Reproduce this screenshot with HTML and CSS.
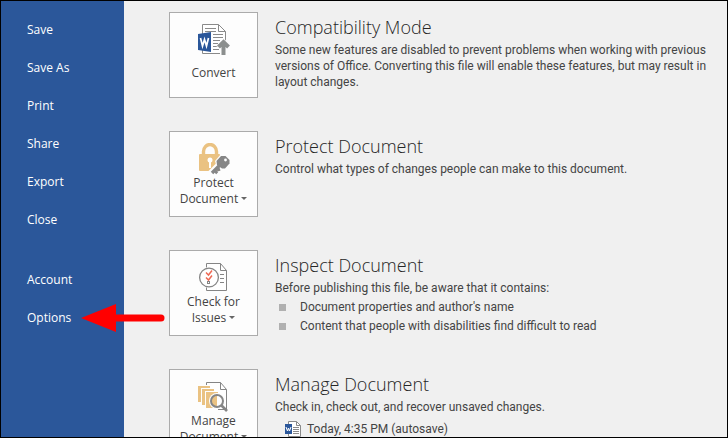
FILE: index.html
```
<!DOCTYPE html>
<html lang="en">
<head>
    <meta charset="UTF-8">
    <meta name="viewport" content="width=device-width, initial-scale=1.0">
    <title>Info</title>
    <link rel="stylesheet" href="styles.css">
</head>
<body>
    <div class="backstage">
        <nav class="sidebar">
            <a href="#save">Save</a>
            <a href="#save-as">Save As</a>
            <a href="#print">Print</a>
            <a href="#share">Share</a>
            <a href="#export">Export</a>
            <a href="#close">Close</a>
            <a href="#account" class="group-start">Account</a>
            <a href="#options" class="options">Options
                <svg class="arrow" width="86" height="30" viewBox="0 0 86 30" aria-hidden="true">
                    <path d="M32 15H80" stroke="#f00" stroke-width="7" stroke-linecap="round"/>
                    <path d="M0 15L35 1V29Z" fill="#f00"/>
                </svg>
            </a>
        </nav>

        <main class="content">
            <section class="row">
                <button type="button" class="tile single">
                    <svg class="icon" viewBox="0 0 32 32" aria-hidden="true">
                        <path d="M4.500 .500H20.500L27.500 7.500V29.500H4.500Z" fill="#fff" stroke="#8a8a8a"/>
                        <path d="M20.500 .500V7.500H27.500" fill="none" stroke="#8a8a8a"/>
                        <path d="M7 4.500H18M7 7.500H18M15 10.500H25M15 13.500H25M15 16.500H22M15 19.500H20M15 22.500H21M15 25.500H21" stroke="#8a8a8a"/>
                        <path d="M18 22L25.500 14L32 21V31H22V24Z" fill="#fdfdfd"/>
                        <path d="M0 10L13 8V28L0 26Z" fill="#2b579a"/>
                        <path d="M2.500 14L4.500 22L6.500 15.500L8.500 22L10.500 14" fill="none" stroke="#fff" stroke-width="1.700"/>
                        <path d="M25.500 31V19M20.500 23L25.500 18L30.500 23" fill="none" stroke="#8c8f8e" stroke-width="4"/>
                    </svg>
                    <span>Convert</span>
                </button>
                <div class="info">
                    <h2>Compatibility Mode</h2>
                    <p>Some new features are disabled to prevent problems when working with previous versions of Office. Converting this file will enable these features, but may result in layout changes.</p>
                </div>
            </section>

            <section class="row">
                <button type="button" class="tile">
                    <svg class="icon" viewBox="0 0 32 32" aria-hidden="true">
                        <path d="M5.500 12V8.500a6.500 7 0 0 1 13 0V12" fill="none" stroke="#eac282" stroke-width="3.400"/>
                        <rect x="1" y="11" width="21" height="17" rx="1" fill="#eac282"/>
                        <circle cx="12" cy="17" r="2.500" fill="#fff"/>
                        <path d="M11 17h2v8h-2z" fill="#fff"/>
                        <path d="M12 30L22 20" stroke="#fdfdfd" stroke-width="5"/>
                        <path d="M17 18L23 11H28L32 16L31 24L26 28L19 25Z" fill="#fdfdfd"/>
                        <path d="M18.500 18L23 13H27.500L31.500 17V20.500L27 25.500H24L19 22Z" fill="#868686"/>
                        <path d="M14 30L23 21M17 30L19 28M19 27L22 26" stroke="#868686" stroke-width="3.400"/>
                        <circle cx="27.500" cy="17" r="1.400" fill="#fff"/>
                    </svg>
                    <span>Protect<br>Document <i class="caret"></i></span>
                </button>
                <div class="info">
                    <h2>Protect Document</h2>
                    <p>Control what types of changes people can make to this document.</p>
                </div>
            </section>

            <section class="row">
                <button type="button" class="tile">
                    <svg class="icon" viewBox="0 0 32 32" aria-hidden="true">
                        <path d="M8.500 1.500H22.500L28.500 8.500V28.500H8.500Z" fill="#fff" stroke="#858585"/>
                        <path d="M22.500 1.500V8.500H28.500" fill="none" stroke="#858585"/>
                        <path d="M22 12.500H26M22 16.500H26M22 20.500H26" stroke="#858585"/>
                        <circle cx="11" cy="15.500" r="10.500" fill="#fdfdfd"/>
                        <circle cx="11" cy="15.500" r="9.400" fill="#fff" stroke="#858585" stroke-width="1.300"/>
                        <path d="M8 10.500L10.500 13L14 8.500M8 15.500L10.500 18L14 13.500" fill="none" stroke="#ee6a55" stroke-width="1.500"/>
                        <rect x="9.500" y="19.500" width="2" height="2" fill="none" stroke="#858585"/>
                    </svg>
                    <span>Check for<br>Issues <i class="caret"></i></span>
                </button>
                <div class="info">
                    <h2>Inspect Document</h2>
                    <p>Before publishing this file, be aware that it contains:</p>
                    <ul class="issues">
                        <li>Document properties and author's name</li>
                        <li>Content that people with disabilities find difficult to read</li>
                    </ul>
                </div>
            </section>

            <section class="row">
                <button type="button" class="tile">
                    <svg class="icon" viewBox="0 0 32 32" aria-hidden="true">
                        <path d="M8.500 4V1.500H22.500L28.500 8.500V28.500H20" fill="#fff" stroke="#858585"/>
                        <path d="M22.500 1.500V8.500H28.500" fill="none" stroke="#858585"/>
                        <path d="M0 5H12V7H3V21H0Z" fill="#eac282"/>
                        <path d="M4 8H16V10H7V24H4Z" fill="#eac282"/>
                        <path d="M8 11H20V27H8Z" fill="#eac282"/>
                        <circle cx="19" cy="20" r="8" fill="#fdfdfd"/>
                        <path d="M19 14a6 6 0 0 0 0 12z" fill="#eac282"/>
                        <circle cx="19" cy="20" r="6" fill="none" stroke="#858585" stroke-width="2"/>
                        <path d="M23.500 24.500L29 30" stroke="#858585" stroke-width="2.600"/>
                    </svg>
                    <span>Manage<br>Document <i class="caret"></i></span>
                </button>
                <div class="info">
                    <h2>Manage Document</h2>
                    <p>Check in, check out, and recover unsaved changes.</p>
                    <a href="#autosave" class="version">
                        <svg width="16" height="16" viewBox="0 0 16 16" aria-hidden="true">
                            <path d="M3.500 .500H11.500L15.500 4.500V15.500H3.500Z" fill="#fff" stroke="#8a8a8a"/>
                            <path d="M11.500 .500V4.500H15.500" fill="none" stroke="#8a8a8a"/>
                            <path d="M8 6.500H14M8 8.500H14M8 10.500H14M8 12.500H14" stroke="#8a8a8a"/>
                            <path d="M0 3H7V13H0Z" fill="#2b579a"/>
                            <path d="M1 6L2.500 10L3.500 7L4.500 10L6 6" fill="none" stroke="#fff"/>
                        </svg>
                        Today, 4:35 PM (autosave)
                    </a>
                </div>
            </section>
        </main>
    </div>
</body>
</html>
```
FILE: styles.css
```
* {
    margin: 0;
    padding: 0;
    box-sizing: border-box;
}

body {
    font-family: 'Open Sans', 'Noto Sans', sans-serif;
    font-size: 12px;
    line-height: 16px;
    color: #444;
}

.backstage {
    display: flex;
    height: 100vh;
    border: 1px solid #000;
    background: #f0f0f0;
    overflow: hidden;
}

.sidebar {
    flex: 0 0 123px;
    display: flex;
    flex-direction: column;
    padding-top: 10px;
    background: #2b579a;
}

.sidebar a {
    padding: 0 26px;
    line-height: 38px;
    color: #fff;
    text-decoration: none;
}

.sidebar .group-start {
    margin-top: 22px;
}

.sidebar .options {
    position: relative;
}

/* points at Options, runs over the sidebar edge */
.arrow {
    position: absolute;
    left: 80px;
    top: 4px;
}

.content {
    flex: 1;
    display: flex;
    flex-direction: column;
    gap: 33px;
    padding: 11px 20px 0 45px;
}

.row {
    display: flex;
    align-items: flex-start;
    gap: 17px;
    min-height: 86px;
}

.tile {
    flex: 0 0 89px;
    height: 86px;
    display: flex;
    flex-direction: column;
    align-items: center;
    padding-top: 11px;
    border: 1px solid #ababab;
    background: #fdfdfd;
    font: inherit;
    color: #444;
    text-align: center;
}

.tile.single {
    gap: 9px;
}

.icon {
    width: 32px;
    height: 32px;
    flex: none;
}

.caret {
    display: inline-block;
    border: 3px solid transparent;
    border-top-color: #666;
    border-bottom: 0;
    vertical-align: 3px;
}

.info {
    flex: 1;
    font-family: Roboto, 'Open Sans', sans-serif;
}

h2 {
    font-family: 'Open Sans', 'Noto Sans', sans-serif;
    font-size: 18px;
    font-weight: 300;
    line-height: 30px;
    color: #262626;
}

.issues {
    margin-top: 2px;
    list-style: none;
}

.issues li {
    display: flex;
    align-items: center;
    gap: 14px;
    padding-left: 4px;
    line-height: 19px;
}

.issues li::before {
    content: '';
    width: 7px;
    height: 7px;
    background: #b0b0b0;
}

.version {
    display: flex;
    align-items: center;
    gap: 6px;
    margin-top: 6px;
    padding-left: 10px;
    color: #444;
    text-decoration: none;
}
```
